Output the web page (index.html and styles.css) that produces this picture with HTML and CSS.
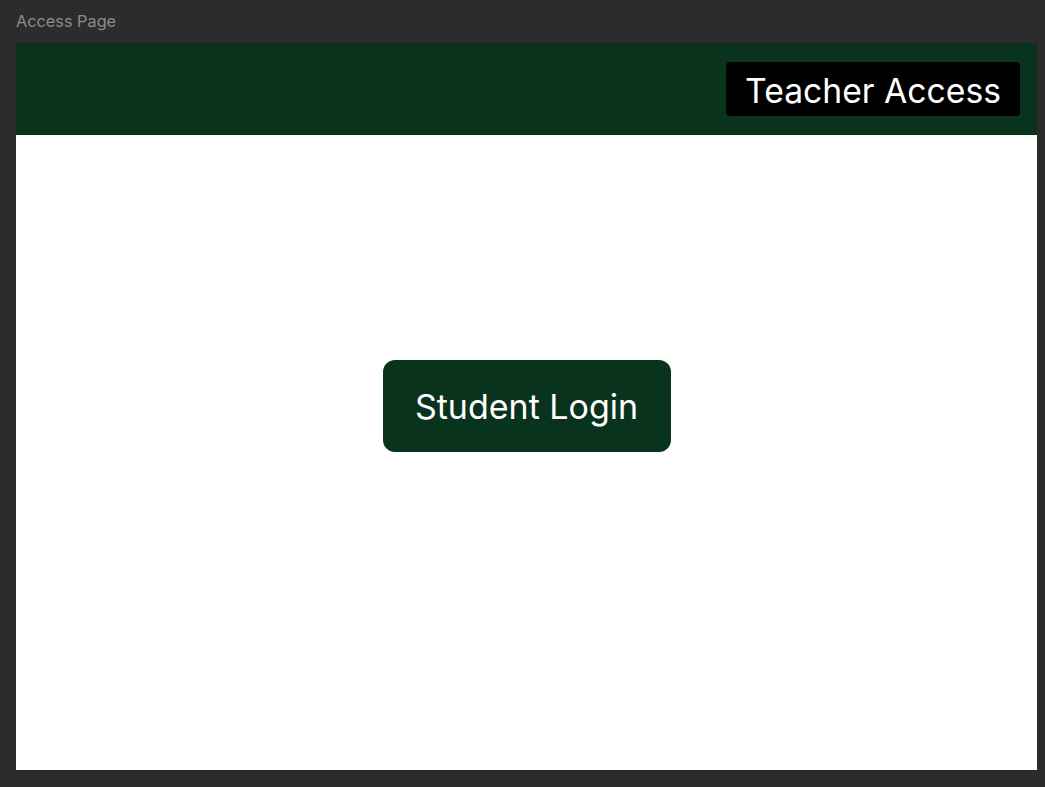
FILE: index.html
```html
<!DOCTYPE html>
<html>
<head>
<meta charset="utf-8">
<link rel="stylesheet" href="styles.css">
</head>
<body>
<div class="label">Access Page</div>
<div class="frame">
  <header class="topbar">
    <button class="teacher">Teacher Access</button>
  </header>
  <main class="content">
    <button class="student">Student Login</button>
  </main>
</div>
</body>
</html>
```
FILE: styles.css
```css
html, body {
  margin: 0;
  padding: 0;
  background: #2c2c2c;
  font-family: Inter, "Noto Sans", sans-serif;
}
body {
  width: 1045px;
  height: 787px;
  overflow: hidden;
}
.label {
  height: 43px;
  padding-left: 16px;
  box-sizing: border-box;
  padding-top: 11px;
  font-size: 16.3px;
  line-height: 20px;
  color: #8c8c8c;
}
.frame {
  margin-left: 16px;
  width: 1021px;
  height: 727px;
  background: #ffffff;
  display: flex;
  flex-direction: column;
}
.topbar {
  height: 92px;
  background: #0a331e;
  display: flex;
  align-items: center;
  justify-content: flex-end;
  padding-right: 17px;
}
.teacher {
  width: 294px;
  height: 54px;
  background: #000000;
  color: #ffffff;
  border: none;
  border-radius: 4px;
  font-family: Inter, sans-serif;
  font-size: 33.7px;
  padding: 2px 0 0 0;
}
.content {
  flex: 1;
  display: flex;
  justify-content: center;
  padding-top: 225px;
}
.student {
  width: 288px;
  height: 92px;
  background: #0a331e;
  color: #ffffff;
  border: none;
  border-radius: 12px;
  font-family: Inter, sans-serif;
  font-size: 34px;
  padding: 0;
}
```
